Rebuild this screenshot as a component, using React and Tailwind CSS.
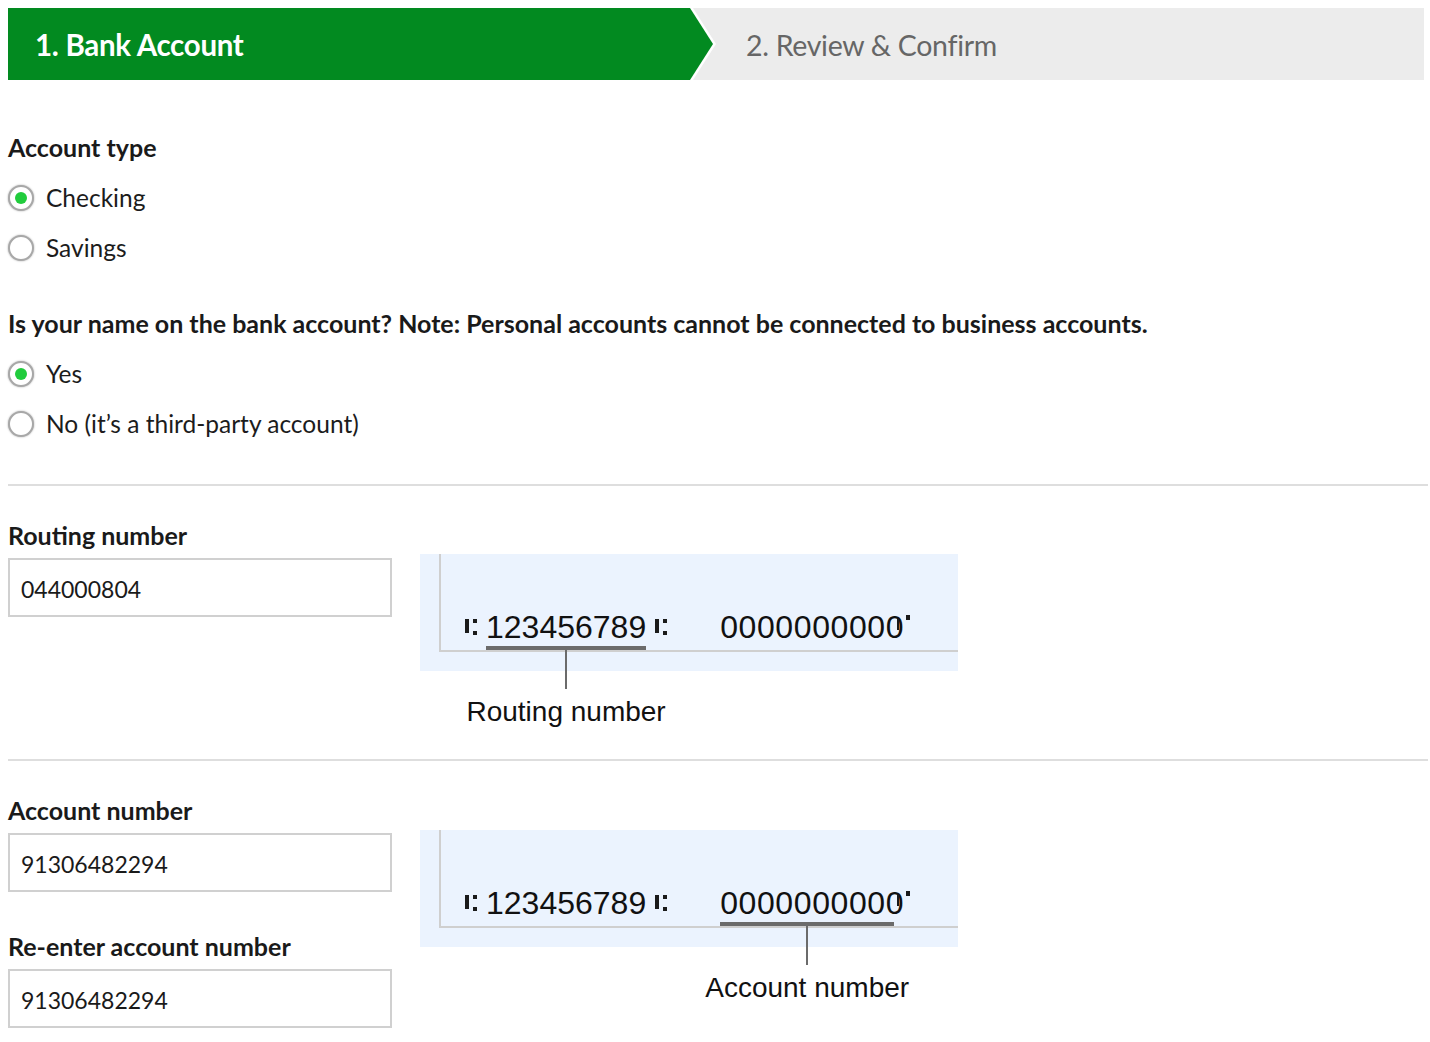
import React from 'react';

const font = { fontFamily: 'Lato, "Open Sans", sans-serif' };
const micr = { fontFamily: '"Liberation Sans", Arial, sans-serif' };

function Radio({ checked, label }) {
  return (
    <label className="flex items-center h-[50px] gap-[12px] cursor-pointer">
      <span className="w-[26px] h-[26px] rounded-full border-2 border-[#a8a8a8] bg-white shadow-[0_0_2px_rgba(0,0,0,0.35)] flex items-center justify-center shrink-0">
        {checked && <span className="w-[12px] h-[12px] rounded-full bg-[#21cc3d]" />}
      </span>
      <span className="text-[24.5px] leading-[26px] text-[#1c1c1c]">{label}</span>
    </label>
  );
}

function Transit() {
  return (
    <span className="inline-flex items-start gap-[4px] h-[16px] shrink-0">
      <span className="w-[4px] h-[14px] bg-[#1a1a1a]" />
      <span className="flex flex-col justify-between h-[16px]">
        <span className="w-[4px] h-[4px] bg-[#1a1a1a]" />
        <span className="w-[4px] h-[4px] bg-[#1a1a1a]" />
      </span>
    </span>
  );
}

function OnUs() {
  return (
    <span className="relative w-[8px] h-[32px] shrink-0">
      <span className="absolute left-[-7px] top-[8px] w-[2px] h-[11px] bg-[#1a1a1a]" />
      <span className="absolute left-[2px] top-[4px] w-[4px] h-[5px] bg-[#1a1a1a]" />
    </span>
  );
}

function Callout({ label, right = 0 }) {
  return (
    <>
      <span className="absolute left-0 top-[calc(100%+3px)] h-[4px] bg-[#6b6b6b]" style={{ right }} />
      <span
        className="absolute top-[calc(100%+6px)] w-[2px] h-[40px] bg-[#6b6b6b]"
        style={{ left: `calc(50% - ${right / 2}px - 1px)` }}
      />
      <span
        className="absolute top-[calc(100%+53px)] -translate-x-1/2 whitespace-nowrap text-[28px] leading-[32px] tracking-normal text-[#111]"
        style={{ left: `calc(50% - ${right / 2}px)`, ...micr }}
      >
        {label}
      </span>
    </>
  );
}

function CheckFigure({ highlight }) {
  return (
    <div className="w-[538px] h-[117px] bg-[#ebf3fe] pl-[19px]">
      <div
        className="h-[98px] border-l-2 border-b-2 border-[#cfcfcf] flex items-end pb-[7px] pl-[24px] text-[32px] leading-[32px] text-[#111]"
        style={micr}
      >
        <span className="mb-[5px]"><Transit /></span>
        <span className="relative ml-[9px]">
          123456789
          {highlight === 'routing' && <Callout label="Routing number" />}
        </span>
        <span className="ml-[9px] mb-[5px]"><Transit /></span>
        <span className="relative ml-[53px] tracking-[0.6px]">
          0000000000
          {highlight === 'account' && <Callout label="Account number" right={10} />}
        </span>
        <OnUs />
      </div>
    </div>
  );
}

function Field({ label, value, className = '' }) {
  return (
    <div className={className}>
      <div className="text-[25px] leading-[26px] font-bold text-[#1a1a1a]">{label}</div>
      <input
        readOnly
        value={value}
        className="mt-[10px] w-[384px] h-[59px] border-2 border-[#d0d0d0] px-[11px] pt-[3px] text-[23px] text-[#1a1a1a] outline-none"
        style={font}
      />
    </div>
  );
}

export default function App() {
  return (
    <div className="bg-white min-h-[1042px] px-[8px] pt-[8px]" style={font}>
      <div className="flex h-[72px] bg-[#ececec] w-[1416px]">
        <div className="w-[682px] bg-[#028a20] flex items-center pl-[27px] pt-[3px]">
          <span className="text-white font-bold text-[29.5px] tracking-[-0.3px]">1. Bank Account</span>
        </div>
        <svg width="26" height="72" viewBox="0 0 26 72" className="shrink-0">
          <polygon points="0,0 3,0 26,36 3,72 0,72" fill="#ffffff" />
          <polygon points="0,0 23,36 0,72" fill="#028a20" />
        </svg>
        <div className="flex items-center pl-[30px] pt-[3px]">
          <span className="text-[#666] text-[28.5px] tracking-[-0.3px]">2. Review &amp; Confirm</span>
        </div>
      </div>

      <div className="mt-[54px] text-[25px] leading-[26px] font-bold text-[#1a1a1a]">Account type</div>
      <div className="mt-[13px]">
        <Radio checked label="Checking" />
        <Radio label="Savings" />
      </div>

      <div className="mt-[37px] text-[25px] leading-[26px] font-bold text-[#1a1a1a]">
        Is your name on the bank account? Note: Personal accounts cannot be connected to business accounts.
      </div>
      <div className="mt-[13px]">
        <Radio checked label="Yes" />
        <Radio label="No (it’s a third-party account)" />
      </div>

      <div className="mt-[35px] h-[2px] bg-[#dedede] w-[1420px]" />

      <div className="mt-[36px] flex items-start gap-[28px]">
        <Field label="Routing number" value="044000804" />
        <div className="mt-[32px]">
          <CheckFigure highlight="routing" />
        </div>
      </div>

      <div className="mt-[88px] h-[2px] bg-[#dedede] w-[1420px]" />

      <div className="mt-[36px] flex items-start gap-[28px]">
        <div>
          <Field label="Account number" value="91306482294" />
          <Field label="Re-enter account number" value="91306482294" className="mt-[41px]" />
        </div>
        <div className="mt-[33px]">
          <CheckFigure highlight="account" />
        </div>
      </div>
    </div>
  );
}
